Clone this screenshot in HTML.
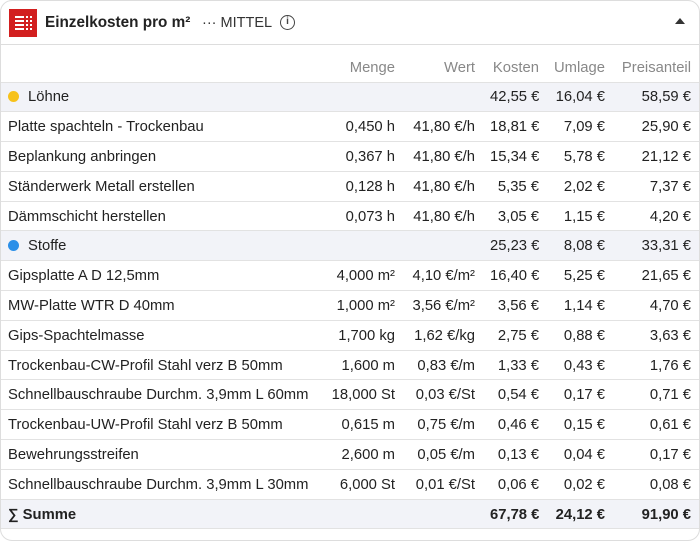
<!DOCTYPE html>
<html><head><meta charset="utf-8"><style>
*{margin:0;padding:0;box-sizing:border-box}
body{width:700px;height:542px;background:#fff;font-family:"Liberation Sans",sans-serif;color:#222;overflow:hidden}
.card{position:absolute;left:0;top:0;width:700px;height:541px;border:1px solid #ddd;border-radius:12px;overflow:hidden;background:#fff}
.hdr{height:44px;border-bottom:1px solid #ddd;position:relative}
.logo{position:absolute;left:8px;top:8px;width:28px;height:28px;background:#d21f1f}
.title{position:absolute;left:44px;top:13px;font-size:15.3px;font-weight:bold;color:#222}
.sub{position:absolute;left:201px;top:14px;font-size:14.5px;color:#333;letter-spacing:0}
.info{position:absolute;left:279px;top:14px;width:15px;height:15px;border:1.5px solid #444;border-radius:50%;font-size:10px;font-weight:bold;text-align:center;line-height:12px;color:#444}
.tri{position:absolute;right:14px;top:17px;width:0;height:0;border-left:5px solid transparent;border-right:5px solid transparent;border-bottom:6px solid #333}
table{border-collapse:collapse;width:698px;font-size:14.8px;table-layout:fixed}
td,th{height:29.8px;padding:1px 8px 0 7px;white-space:nowrap;border-bottom:1px solid #e2e2e2;text-align:right;font-weight:normal}
td:first-child{text-align:left}
th{height:37px;color:#888;font-weight:normal;padding-top:10px}
tr.g td{background:#f2f3f8}
tr.s td{background:#f2f3f8;font-weight:bold}
.dot{display:inline-block;width:11px;height:11px;border-radius:50%;margin-right:9px;vertical-align:-1px}
</style></head><body>
<div class="card">
<div class="hdr">
<div class="logo"><svg width="28" height="28"><g fill="#fff"><rect x="6" y="7" width="9" height="2"/><rect x="6" y="11" width="9" height="2"/><rect x="6" y="15" width="9" height="2"/><rect x="6" y="19" width="9" height="2"/><rect x="17" y="7" width="2" height="2"/><rect x="21" y="7" width="2" height="2"/><rect x="17" y="11" width="2" height="2"/><rect x="21" y="11" width="2" height="2"/><rect x="17" y="15" width="2" height="2"/><rect x="21" y="15" width="2" height="2"/><rect x="17" y="19" width="2" height="2"/><rect x="21" y="19" width="2" height="2"/></g></svg></div>
<div class="title">Einzelkosten pro m²</div>
<div class="sub">··· MITTEL</div>
<div class="info">i</div>
<div class="tri"></div>
</div>
<table>
<colgroup><col style="width:320px"><col style="width:82px"><col style="width:80px"><col style="width:64px"><col style="width:66px"><col style="width:86px"></colgroup>
<tr><th></th><th>Menge</th><th>Wert</th><th>Kosten</th><th>Umlage</th><th>Preisanteil</th></tr>
<tr class="g"><td><span class="dot" style="background:#f7c21b"></span>Löhne</td><td></td><td></td><td>42,55 €</td><td>16,04 €</td><td>58,59 €</td></tr>
<tr><td>Platte spachteln - Trockenbau</td><td>0,450 h</td><td>41,80 €/h</td><td>18,81 €</td><td>7,09 €</td><td>25,90 €</td></tr>
<tr><td>Beplankung anbringen</td><td>0,367 h</td><td>41,80 €/h</td><td>15,34 €</td><td>5,78 €</td><td>21,12 €</td></tr>
<tr><td>Ständerwerk Metall erstellen</td><td>0,128 h</td><td>41,80 €/h</td><td>5,35 €</td><td>2,02 €</td><td>7,37 €</td></tr>
<tr><td>Dämmschicht herstellen</td><td>0,073 h</td><td>41,80 €/h</td><td>3,05 €</td><td>1,15 €</td><td>4,20 €</td></tr>
<tr class="g"><td><span class="dot" style="background:#2b8fe8"></span>Stoffe</td><td></td><td></td><td>25,23 €</td><td>8,08 €</td><td>33,31 €</td></tr>
<tr><td>Gipsplatte A D 12,5mm</td><td>4,000 m²</td><td>4,10 €/m²</td><td>16,40 €</td><td>5,25 €</td><td>21,65 €</td></tr>
<tr><td>MW-Platte WTR D 40mm</td><td>1,000 m²</td><td>3,56 €/m²</td><td>3,56 €</td><td>1,14 €</td><td>4,70 €</td></tr>
<tr><td>Gips-Spachtelmasse</td><td>1,700 kg</td><td>1,62 €/kg</td><td>2,75 €</td><td>0,88 €</td><td>3,63 €</td></tr>
<tr><td>Trockenbau-CW-Profil Stahl verz B 50mm</td><td>1,600 m</td><td>0,83 €/m</td><td>1,33 €</td><td>0,43 €</td><td>1,76 €</td></tr>
<tr><td>Schnellbauschraube Durchm. 3,9mm L 60mm</td><td>18,000 St</td><td>0,03 €/St</td><td>0,54 €</td><td>0,17 €</td><td>0,71 €</td></tr>
<tr><td>Trockenbau-UW-Profil Stahl verz B 50mm</td><td>0,615 m</td><td>0,75 €/m</td><td>0,46 €</td><td>0,15 €</td><td>0,61 €</td></tr>
<tr><td>Bewehrungsstreifen</td><td>2,600 m</td><td>0,05 €/m</td><td>0,13 €</td><td>0,04 €</td><td>0,17 €</td></tr>
<tr><td>Schnellbauschraube Durchm. 3,9mm L 30mm</td><td>6,000 St</td><td>0,01 €/St</td><td>0,06 €</td><td>0,02 €</td><td>0,08 €</td></tr>
<tr class="s"><td>∑ Summe</td><td></td><td></td><td>67,78 €</td><td>24,12 €</td><td>91,90 €</td></tr>
</table>
</div>
</body></html>
